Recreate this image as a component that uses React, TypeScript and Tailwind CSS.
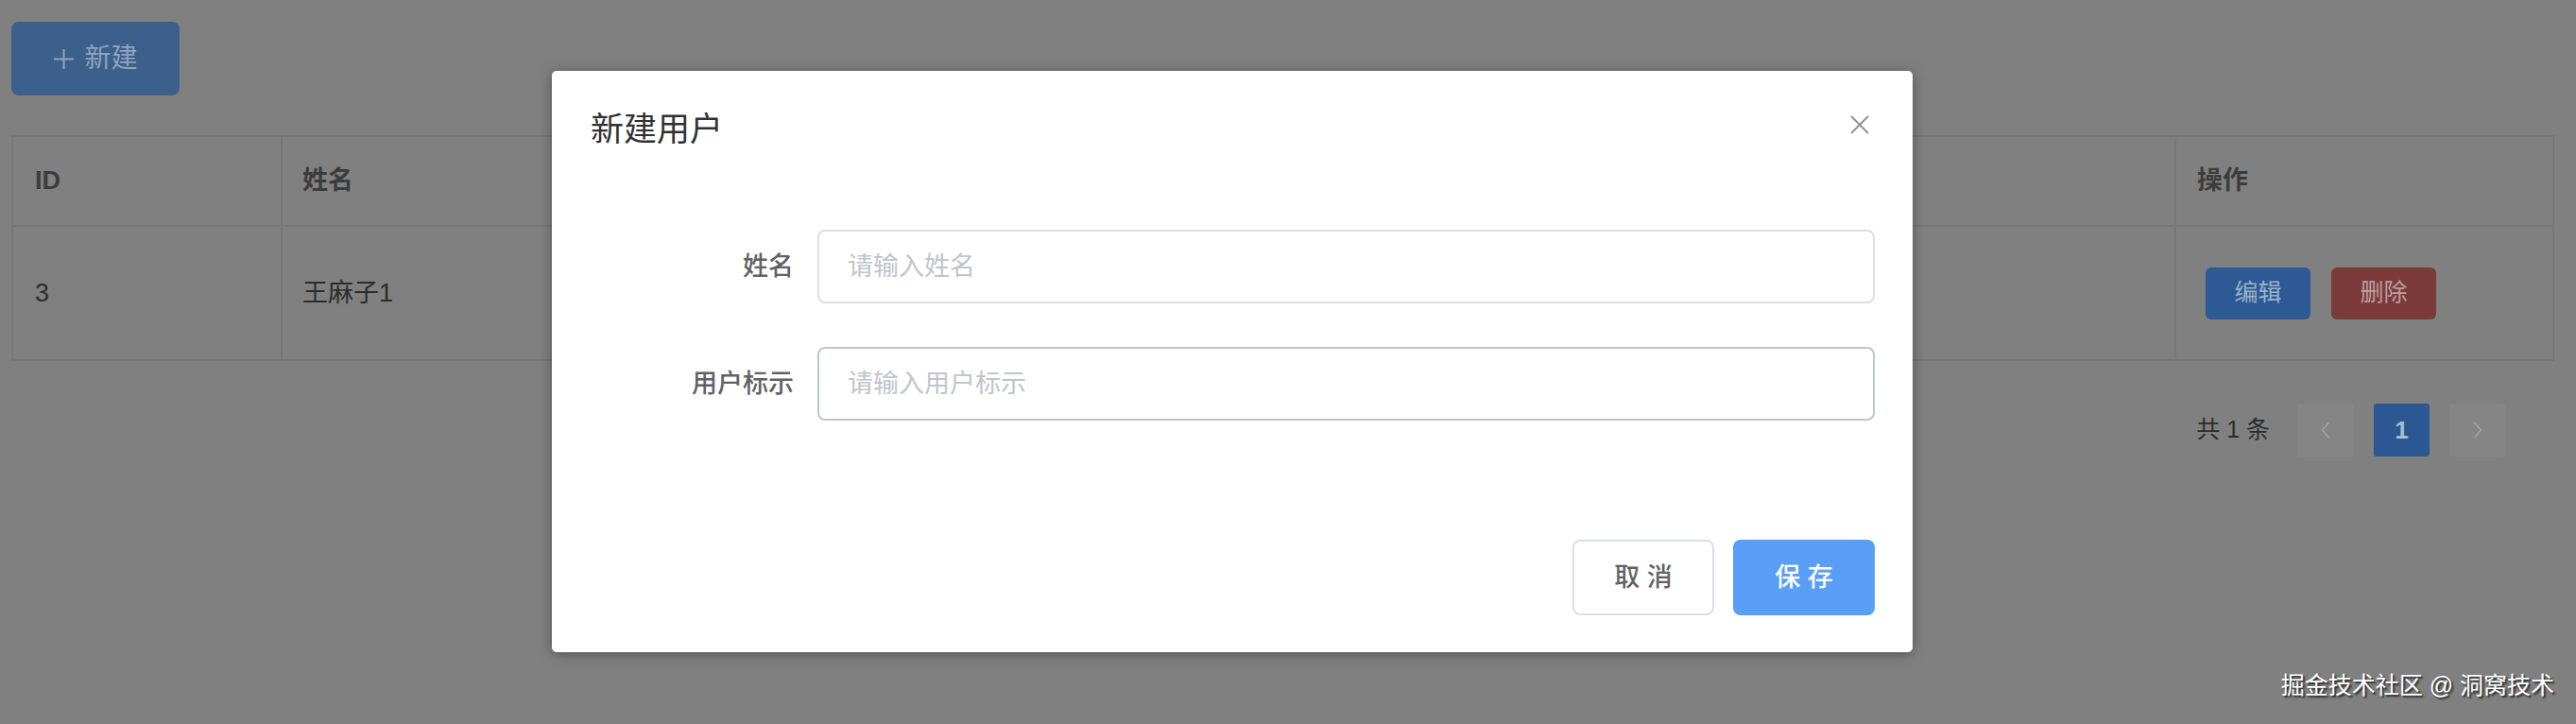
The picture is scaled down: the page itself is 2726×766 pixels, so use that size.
export default function App() {
  return (
    <div className="relative w-[2726px] h-[766px] overflow-hidden bg-[#808080] font-['Liberation_Sans','Noto_Sans_CJK_SC',sans-serif]">
      {/* page behind the dialog (dimmed) */}
      <div className="pl-[12px] pr-[23px] pt-[23px]">
        <button className="flex h-[78px] w-[178px] items-center justify-center gap-[10px] rounded-[8px] bg-[#3c5f8c] text-[28px] text-[#8ea4c0]">
          <svg width="23" height="23" viewBox="0 0 23 23">
            <path d="M11.5 1v21M1 11.5h21" stroke="#8ea4c0" strokeWidth="2" />
          </svg>
          <span>新建</span>
        </button>

        <table className="mt-[42px] w-full table-fixed border-collapse border-2 border-[#777777]">
          <thead>
            <tr className="h-[95px] text-left text-[27px] font-bold text-[#3c3c3c]">
              <th className="w-[285px] border-2 border-[#777777] pl-[23px]">ID</th>
              <th className="w-[1000px] border-2 border-[#777777] pl-[21px]">姓名</th>
              <th className="border-2 border-[#777777] pl-[21px]">用户标示</th>
              <th className="w-[400px] border-2 border-[#777777] pl-[22px]">操作</th>
            </tr>
          </thead>
          <tbody>
            <tr className="h-[142px] text-[27px] text-[#2c2c2c]">
              <td className="border-2 border-[#777777] pl-[23px]">3</td>
              <td className="border-2 border-[#777777] pl-[21px]">王麻子1</td>
              <td className="border-2 border-[#777777] pl-[21px]">wangmazi</td>
              <td className="border-2 border-[#777777] pl-[31px]">
                <div className="flex gap-[22px]">
                  <button className="h-[55px] w-[111px] rounded-[6px] bg-[#2d5a94] text-[25px] text-[#9db1cb]">编辑</button>
                  <button className="h-[55px] w-[111px] rounded-[6px] bg-[#7b3b3b] text-[25px] text-[#bf9d9d]">删除</button>
                </div>
              </td>
            </tr>
          </tbody>
        </table>

        <div className="mt-[45px] flex items-center justify-end pr-[52px] text-[25px] text-[#2c2c2c]">
          <span className="mr-[29px] whitespace-pre">共 1 条</span>
          <div className="flex gap-[21px]">
            <div className="flex h-[56px] w-[60px] items-center justify-center rounded-[3px] bg-[#858585]">
              <svg width="10" height="18" viewBox="0 0 10 18">
                <path d="M8.5 1L1.5 9l7 8" fill="none" stroke="#a3a3a3" strokeWidth="1.6" />
              </svg>
            </div>
            <div className="flex h-[56px] w-[59px] items-center justify-center rounded-[3px] bg-[#2b5892] text-[26px] font-bold text-[#a9bcd6]">1</div>
            <div className="flex h-[56px] w-[59px] items-center justify-center rounded-[3px] bg-[#858585]">
              <svg width="10" height="18" viewBox="0 0 10 18">
                <path d="M1.5 1l7 8-7 8" fill="none" stroke="#a3a3a3" strokeWidth="1.6" />
              </svg>
            </div>
          </div>
        </div>
      </div>

      {/* dialog */}
      <div className="absolute left-[584px] top-[75px] flex h-[615px] w-[1440px] flex-col rounded-[5px] bg-white shadow-[0_2px_14px_rgba(0,0,0,0.35)]">
        <div className="relative px-[41px] pt-[39px]">
          <h2 className="text-[35px] leading-[46px] text-[#303133]">新建用户</h2>
          <button className="absolute right-[46px] top-[47px]">
            <svg width="20" height="20" viewBox="0 0 20 20">
              <path d="M1 1l18 18M19 1L1 19" stroke="#909399" strokeWidth="2" />
            </svg>
          </button>
        </div>

        <div className="mt-[83px] flex flex-col gap-[46px] pl-[41px] pr-[40px]">
          <div className="flex items-center">
            <label className="w-[240px] pr-[25px] text-right text-[27px] font-medium text-[#606266]">姓名</label>
            <input
              placeholder="请输入姓名"
              className="h-[78px] flex-1 rounded-[8px] border-2 border-[#dcdfe6] px-[30px] text-[27px] text-[#606266] outline-none placeholder:text-[#c0c4cc]"
            />
          </div>
          <div className="flex items-center">
            <label className="w-[240px] pr-[25px] text-right text-[27px] font-medium text-[#606266]">用户标示</label>
            <input
              placeholder="请输入用户标示"
              className="h-[78px] flex-1 rounded-[8px] border-2 border-[#c0c4cc] px-[30px] text-[27px] text-[#606266] outline-none placeholder:text-[#c0c4cc]"
            />
          </div>
        </div>

        <div className="mt-auto flex justify-end gap-[20px] pb-[39px] pr-[40px]">
          <button className="h-[80px] w-[150px] whitespace-pre rounded-[8px] border-2 border-[#dcdfe6] bg-white text-[27px] font-medium text-[#606266]">取 消</button>
          <button className="h-[80px] w-[150px] whitespace-pre rounded-[8px] bg-[#599ff8] text-[27px] font-medium text-white">保 存</button>
        </div>
      </div>

      {/* watermark */}
      <div className="absolute bottom-[22px] right-[23px] whitespace-pre text-[25px] text-white [text-shadow:2px_2px_2px_rgba(0,0,0,0.7)]">
        掘金技术社区 @ 洞窝技术
      </div>
    </div>
  );
}
